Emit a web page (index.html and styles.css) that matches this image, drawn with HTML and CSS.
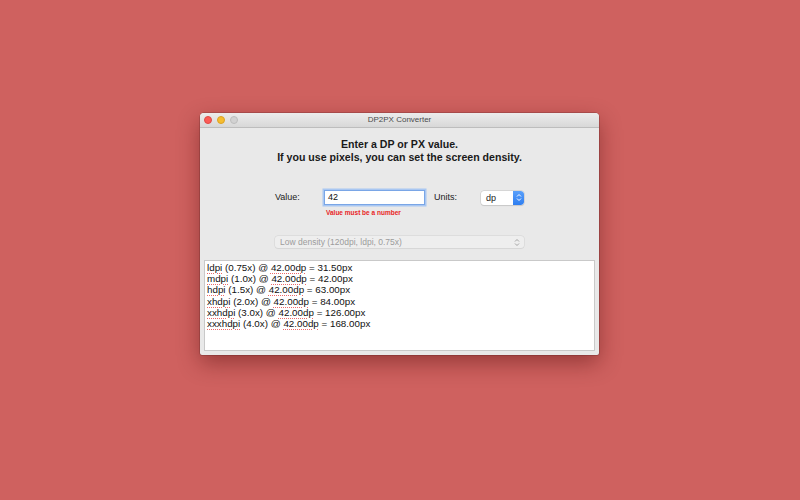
FILE: index.html
```html
<!DOCTYPE html>
<html>
<head>
<meta charset="utf-8">
<link rel="stylesheet" href="styles.css">
</head>
<body>
<div class="stage">
  <div class="window">
    <div class="titlebar">
      <div class="lights">
        <span class="light red"></span>
        <span class="light yellow"></span>
        <span class="light gray"></span>
      </div>
      <div class="title">DP2PX Converter</div>
    </div>
    <div class="content">
      <div class="heading">Enter a DP or PX value.<br>If you use pixels, you can set the screen density.</div>
      <div class="form-row">
        <span class="label value-label">Value:</span>
        <div class="field-col">
          <div class="input">42</div>
          <div class="error">Value must be a number</div>
        </div>
        <span class="label units-label">Units:</span>
        <div class="select">
          <span>dp</span>
          <span class="stepper">
            <svg width="6" height="9" viewBox="0 0 6 9"><path d="M1 3.5 L3 1.5 L5 3.5 M1 5.5 L3 7.5 L5 5.5" fill="none" stroke="#fff" stroke-width="1"/></svg>
          </span>
        </div>
      </div>
      <div class="density">
        <span>Low density (120dpi, ldpi, 0.75x)</span>
        <svg width="6" height="9" viewBox="0 0 6 9"><path d="M1 3.5 L3 1.5 L5 3.5 M1 5.5 L3 7.5 L5 5.5" fill="none" stroke="#9a9a9a" stroke-width="0.9"/></svg>
      </div>
      <div class="output">
        <div><u>ldpi</u> (0.75x) @ <u>42.00dp</u> = 31.50px</div>
        <div><u>mdpi</u> (1.0x) @ <u>42.00dp</u> = 42.00px</div>
        <div><u>hdpi</u> (1.5x) @ <u>42.00dp</u> = 63.00px</div>
        <div><u>xhdpi</u> (2.0x) @ <u>42.00dp</u> = 84.00px</div>
        <div><u>xxhdpi</u> (3.0x) @ <u>42.00dp</u> = 126.00px</div>
        <div><u>xxxhdpi</u> (4.0x) @ <u>42.00dp</u> = 168.00px</div>
      </div>
    </div>
  </div>
</div>
</body>
</html>
```
FILE: styles.css
```css
html, body {
  margin: 0;
  padding: 0;
  width: 800px;
  height: 500px;
  background: #cf615f;
  font-family: "Liberation Sans", Arial, sans-serif;
  overflow: hidden;
}
.stage {
  padding: 113px 0 0 200px;
}
.window {
  width: 399px;
  height: 242px;
  background: #e9e9e9;
  border-radius: 4px 4px 2px 2px;
  box-shadow: 0 8px 22px rgba(80, 10, 10, 0.45), 0 0 0 0.5px rgba(90, 40, 40, 0.5);
  display: flex;
  flex-direction: column;
  overflow: hidden;
}
.titlebar {
  height: 14px;
  background: linear-gradient(#ececec, #d8d8d8);
  border-bottom: 1px solid #bdbdbd;
  display: flex;
  align-items: center;
  position: relative;
}
.lights {
  display: flex;
  gap: 5px;
  padding-left: 4px;
}
.light {
  width: 8px;
  height: 8px;
  border-radius: 50%;
  box-sizing: border-box;
}
.light.red { background: #fc5b57; border: 0.5px solid #de4a45; }
.light.yellow { background: #f5bd30; border: 0.5px solid #dca124; }
.light.gray { background: #d2d2d2; border: 0.5px solid #bdbdbd; }
.title {
  position: absolute;
  left: 0;
  right: 0;
  top: 0;
  text-align: center;
  font-size: 8px;
  line-height: 14px;
  color: #4a4a4a;
}
.content {
  flex: 1;
  display: flex;
  flex-direction: column;
  padding: 0 4px 4px 4px;
}
.heading {
  text-align: center;
  font-weight: bold;
  font-size: 10.6px;
  line-height: 13px;
  color: #1a1a1a;
  padding-top: 10px;
}
.form-row {
  display: flex;
  align-items: flex-start;
  margin-top: 26px;
  padding-left: 71px;
}
.label {
  font-size: 9px;
  color: #222;
  line-height: 15px;
}
.value-label { width: 49px; }
.field-col {
  display: flex;
  flex-direction: column;
}
.input {
  width: 96px;
  height: 13px;
  background: #fff;
  border: 1px solid #7aa6e6;
  box-shadow: 0 0 0 1.5px #a9c7f2;
  font-size: 9px;
  line-height: 13px;
  padding-left: 3px;
  color: #111;
  box-sizing: content-box;
}
.error {
  color: #e8251f;
  font-size: 6.5px;
  font-weight: bold;
  padding-left: 2px;
  margin-top: 4px;
}
.units-label {
  margin-left: 9px;
  width: 47px;
}
.select {
  width: 43px;
  height: 14px;
  background: #fff;
  border-radius: 3px;
  box-shadow: 0 0 0 0.5px #c4c4c4, 0 1px 1px rgba(0,0,0,0.12);
  display: flex;
  justify-content: space-between;
  align-items: center;
  font-size: 9px;
  color: #222;
  padding-left: 5px;
  box-sizing: border-box;
  overflow: hidden;
  margin-top: 0.5px;
}
.stepper {
  width: 11px;
  height: 14px;
  background: linear-gradient(#5aa0fb, #2f7ef0);
  display: flex;
  align-items: center;
  justify-content: center;
  border-radius: 0 3px 3px 0;
}
.density {
  margin: 20px 0 0 71px;
  width: 249px;
  height: 12px;
  background: #eeeeee;
  border-radius: 3px;
  box-shadow: 0 0 0 0.5px #d2d2d2, 0 0.5px 1px rgba(0,0,0,0.06);
  display: flex;
  align-items: center;
  justify-content: space-between;
  padding: 0 4px 0 5px;
  box-sizing: border-box;
  font-size: 8.5px;
  color: #9c9c9c;
}
.output {
  margin-top: 12px;
  flex: 1;
  background: #fff;
  border: 1px solid #c9c9c9;
  padding: 0 0 0 2px;
  font-size: 9.8px;
  line-height: 11.2px;
  color: #111;
}
.output div:first-child { margin-top: 1px; }
.output u {
  text-decoration: underline dotted #ec6a6a;
  text-decoration-thickness: 1px;
  text-underline-offset: 1.5px;
}
```
